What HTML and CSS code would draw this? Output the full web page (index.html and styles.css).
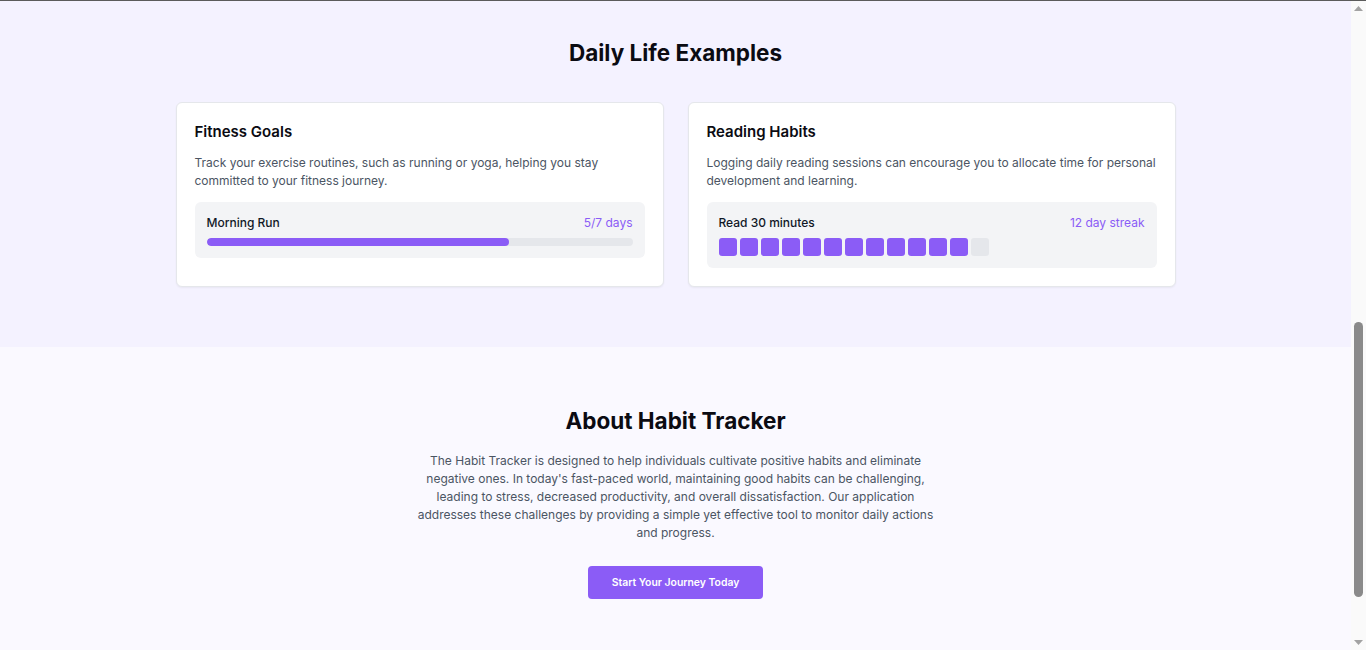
FILE: index.html
```html
<!DOCTYPE html>
<html lang="en">
<head>
<meta charset="utf-8">
<title>Habit Tracker</title>
<link rel="stylesheet" href="styles.css">
</head>
<body>
<div class="window">
  <main class="page">
    <section class="examples" id="examples">
      <h2 class="section-title">Daily Life Examples</h2>
      <div class="cards">
        <article class="card">
          <h3 class="card-title">Fitness Goals</h3>
          <p class="card-text">Track your exercise routines, such as running or yoga, helping you stay committed to your fitness journey.</p>
          <div class="tracker">
            <div class="tracker-head">
              <span class="tracker-name">Morning Run</span>
              <span class="tracker-stat">5/7 days</span>
            </div>
            <div class="progress"><div class="progress-fill" style="width:71%"></div></div>
          </div>
        </article>

        <article class="card">
          <h3 class="card-title">Reading Habits</h3>
          <p class="card-text">Logging daily reading sessions can encourage you to allocate time for personal development and learning.</p>
          <div class="tracker">
            <div class="tracker-head">
              <span class="tracker-name">Read 30 minutes</span>
              <span class="tracker-stat">12 day streak</span>
            </div>
            <div class="streak">
              <span class="day done"></span><span class="day done"></span><span class="day done"></span>
              <span class="day done"></span><span class="day done"></span><span class="day done"></span>
              <span class="day done"></span><span class="day done"></span><span class="day done"></span>
              <span class="day done"></span><span class="day done"></span><span class="day done"></span>
              <span class="day"></span>
            </div>
          </div>
        </article>
      </div>
    </section>

    <section class="about" id="about">
      <h2 class="section-title about-title">About Habit Tracker</h2>
      <p class="about-text">The Habit Tracker is designed to help individuals cultivate positive habits and eliminate negative ones. In today's fast-paced world, maintaining good habits can be challenging, leading to stress, decreased productivity, and overall dissatisfaction. Our application addresses these challenges by providing a simple yet effective tool to monitor daily actions and progress.</p>
      <a class="btn" href="#">Start Your Journey Today</a>
    </section>
  </main>

  <div class="scrollbar" aria-hidden="true">
    <div class="sb-button">
      <svg width="9" height="5" viewBox="0 0 9 5"><polygon points="0,5 9,5 4.5,0" fill="#a3a3a3"/></svg>
    </div>
    <div class="sb-track">
      <div class="sb-thumb"></div>
    </div>
    <div class="sb-button">
      <svg width="9" height="5" viewBox="0 0 9 5"><polygon points="0,0 9,0 4.5,5" fill="#a3a3a3"/></svg>
    </div>
  </div>
</div>
</body>
</html>
```

FILE: styles.css
```css
* { box-sizing: border-box; }

html, body {
  height: 100%;
  margin: 0;
  overflow: hidden;
}

body {
  border-top: 1px solid #5b5b5b;
  font-family: Inter, "Noto Sans", sans-serif;
  color: #111827;
  background: #faf9ff;
}

.window {
  display: flex;
  height: 100%;
}

.page {
  flex: 1;
  min-width: 0;
  overflow: hidden;
}

/* browser scrollbar strip */
.scrollbar {
  width: 15px;
  flex: none;
  display: flex;
  flex-direction: column;
  background: #fafafa;
}

.sb-button {
  height: 15px;
  display: flex;
  align-items: center;
  justify-content: center;
}

.sb-button svg { display: block; }

.sb-track {
  flex: 1;
  padding: 306px 3px 0;
}

.sb-thumb {
  height: 275px;
  border-radius: 5px;
  background: #8a8a8a;
}

.examples {
  background: #f4f2ff;
  padding: 36px 0 60px;
}

.section-title {
  margin: 0 0 33px;
  text-align: center;
  font-size: 22.5px;
  line-height: 32px;
  font-weight: 700;
  color: #0b0b12;
}

.cards {
  width: 1000px;
  margin: 0 auto;
  display: grid;
  grid-template-columns: 1fr 1fr;
  gap: 24px;
}

.card {
  background: #ffffff;
  border: 1px solid #e5e7eb;
  border-radius: 6px;
  padding: 17px 18px 18px;
  box-shadow: 0 1px 2px rgba(0, 0, 0, 0.05);
}

.card-title {
  margin: 0 0 10px;
  font-size: 15px;
  line-height: 24px;
  font-weight: 600;
  color: #0b0b12;
}

.card-text {
  margin: 0 0 12px;
  font-size: 12px;
  line-height: 18px;
  color: #4b5563;
}

.tracker {
  background: #f3f4f6;
  border-radius: 6px;
  padding: 11px 12px 12px;
}

.tracker-head {
  display: flex;
  justify-content: space-between;
  font-size: 12px;
  line-height: 20px;
  margin-bottom: 5px;
}

.tracker-name { font-weight: 500; color: #111827; }
.tracker-stat { color: #8b5cf6; }

.progress {
  height: 8px;
  border-radius: 4px;
  background: #e5e7eb;
  overflow: hidden;
}

.progress-fill {
  height: 100%;
  border-radius: 4px;
  background: #8b5cf6;
}

.streak {
  display: flex;
  gap: 3px;
}

.day {
  width: 18px;
  height: 18px;
  border-radius: 3px;
  background: #e5e7eb;
}

.day.done { background: #8b5cf6; }

.about {
  padding: 58px 0 64px;
  display: flex;
  flex-direction: column;
  align-items: center;
  background: #faf9ff;
}

.about-title { margin-bottom: 15px; }

.about-text {
  max-width: 524px;
  margin: 0 0 24px;
  text-align: center;
  font-size: 12px;
  line-height: 18px;
  color: #4b5563;
}

.btn {
  display: inline-block;
  width: 175px;
  padding: 8px 0;
  border-radius: 4px;
  background: #8b5cf6;
  color: #ffffff;
  font-size: 10.4px;
  line-height: 17px;
  font-weight: 600;
  text-align: center;
  white-space: nowrap;
  text-decoration: none;
}
```
